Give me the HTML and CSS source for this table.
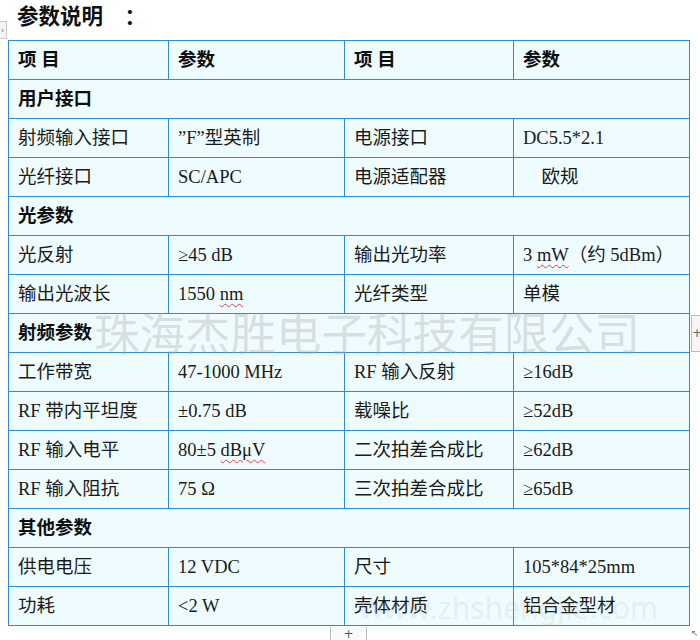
FILE: index.html
```html
<!DOCTYPE html>
<html lang="zh">
<head>
<meta charset="utf-8">
<link rel="stylesheet" href="styles.css">
</head>
<body>
<div class="page">
  <div class="handle">&#8250;</div>
  <h1 class="title">参数说明　：</h1>
  <table class="spec">
    <colgroup>
      <col class="c1"><col class="c2"><col class="c3"><col class="c4">
    </colgroup>
    <tr class="head"><td>项 目</td><td>参数</td><td>项 目</td><td>参数</td></tr>
    <tr class="sec"><td colspan="4">用户接口</td></tr>
    <tr><td>射频输入接口</td><td>”F”型英制</td><td>电源接口</td><td>DC5.5*2.1</td></tr>
    <tr><td>光纤接口</td><td>SC/APC</td><td>电源适配器</td><td>　欧规</td></tr>
    <tr class="sec"><td colspan="4">光参数</td></tr>
    <tr><td>光反射</td><td>≥45 dB</td><td>输出光功率</td><td>3 <span class="sp">mW</span>（约 5dBm）</td></tr>
    <tr><td>输出光波长</td><td>1550 <span class="sp">nm</span></td><td>光纤类型</td><td>单模</td></tr>
    <tr class="sec"><td colspan="4">射频参数</td></tr>
    <tr><td>工作带宽</td><td>47-1000 MHz</td><td>RF 输入反射</td><td>≥16dB</td></tr>
    <tr><td>RF 带内平坦度</td><td>±0.75 dB</td><td>载噪比</td><td>≥52dB</td></tr>
    <tr><td>RF 输入电平</td><td>80±5 <span class="sp">dBμV</span></td><td>二次拍差合成比</td><td>≥62dB</td></tr>
    <tr><td>RF 输入阻抗</td><td>75 Ω</td><td>三次拍差合成比</td><td>≥65dB</td></tr>
    <tr class="sec"><td colspan="4">其他参数</td></tr>
    <tr><td>供电电压</td><td>12 VDC</td><td>尺寸</td><td>105*84*25mm</td></tr>
    <tr><td>功耗</td><td>&lt;2 W</td><td>壳体材质</td><td>铝合金型材</td></tr>
  </table>
  <div class="wm">珠海杰胜电子科技有限公司</div>
  <div class="wm2">www.zhshengjie.com</div>
  <div class="side-btn">+</div>
  <div class="add-btn">+</div>
  <div class="corner">&#8598;</div>
</div>
</body>
</html>
```
FILE: styles.css
```css
html, body {
  margin: 0;
  padding: 0;
  background: #ffffff;
}
.page {
  position: relative;
  width: 700px;
  height: 640px;
  overflow: hidden;
  font-family: "Liberation Serif", "Noto Sans CJK SC", serif;
  color: #161616;
}
.title {
  margin: 0;
  height: 40px;
  box-sizing: border-box;
  padding: 1px 0 0 17px;
  font-size: 21.5px;
  line-height: 28px;
  font-weight: bold;
  font-family: "Noto Sans CJK SC", sans-serif;
  color: #111;
}
.spec {
  margin-left: 8px;
  border-collapse: collapse;
  width: 681px;
  table-layout: fixed;
  background: #effcff;
}
.c1 { width: 160px; }
.c2 { width: 176px; }
.c3 { width: 169px; }
.c4 { width: 176px; }
.spec td {
  border: 1px solid #2a8cd2;
  height: 38px;
  padding: 0 0 0 9px;
  font-size: 18.5px;
  line-height: 24px;
  white-space: nowrap;
  vertical-align: middle;
  color: #1a1a1a;
}
.head td,
.sec td {
  font-weight: bold;
  color: #0e0e0e;
}
.sp {
  text-decoration: underline wavy #e04040;
  text-decoration-thickness: 1px;
  text-underline-offset: 3px;
}
.wm {
  position: absolute;
  left: 94px;
  top: 303px;
  font-family: "Noto Sans CJK SC", sans-serif;
  font-size: 45.5px;
  line-height: 56px;
  color: rgba(170, 170, 170, 0.36);
  white-space: nowrap;
  pointer-events: none;
}
.wm2 {
  position: absolute;
  left: 360px;
  top: 590px;
  font-family: "Noto Sans", sans-serif;
  font-size: 30px;
  line-height: 36px;
  color: rgba(170, 170, 170, 0.18);
  white-space: nowrap;
}
.handle {
  position: absolute;
  left: -2px;
  top: 21px;
  width: 7px;
  height: 16px;
  border: 1px solid #c8c8c8;
  background: #f4f4f4;
  font-size: 9px;
  line-height: 16px;
  text-align: center;
  color: #777;
  font-family: "DejaVu Sans", sans-serif;
}
.side-btn {
  position: absolute;
  left: 691px;
  top: 315px;
  width: 14px;
  height: 35px;
  border: 1px solid #bcbcbc;
  background: #f6f6f6;
  font-family: "DejaVu Sans", sans-serif;
  font-size: 12px;
  line-height: 35px;
  color: #666;
  text-indent: 0;
}
.add-btn {
  position: absolute;
  left: 330px;
  top: 627px;
  width: 35px;
  height: 20px;
  border-left: 1px solid #bcbcbc;
  border-right: 1px solid #bcbcbc;
  background: #fafafa;
  font-family: "DejaVu Sans", sans-serif;
  font-size: 12px;
  line-height: 14px;
  text-align: center;
  color: #555;
}
.corner {
  position: absolute;
  left: 691px;
  top: 628px;
  font-family: "DejaVu Sans", sans-serif;
  font-size: 9px;
  color: #777;
}
```
